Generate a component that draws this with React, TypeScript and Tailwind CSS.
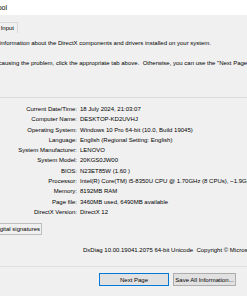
const rows: [string, string][] = [
  ["Current Date/Time:", "18 July 2024, 21:03:07"],
  ["Computer Name:", "DESKTOP-KD2UVHJ"],
  ["Operating System:", "Windows 10 Pro 64-bit (10.0, Build 19045)"],
  ["Language:", "English (Regional Setting: English)"],
  ["System Manufacturer:", "LENOVO"],
  ["System Model:", "20KGS0JW00"],
  ["BIOS:", "N23ET85W (1.60 )"],
  ["Processor:", "Intel(R) Core(TM) i5-8350U CPU @ 1.70GHz (8 CPUs), ~1.9GHz"],
  ["Memory:", "8192MB RAM"],
  ["Page file:", "3460MB used, 6490MB available"],
  ["DirectX Version:", "DirectX 12"],
];

export default function App() {
  return (
    <div
      className="w-[247px] h-[296px] overflow-hidden bg-[#f0f0f0] text-[6px] text-black leading-[10px]"
      style={{ fontFamily: '"Liberation Sans", Arial, sans-serif' }}
    >
      {/* title bar */}
      <div className="h-[15px] bg-white flex items-center">
        <div className="w-[7px] flex justify-end">
          <span className="flex-none whitespace-nowrap text-[7px]">DirectX Diagnostic Tool</span>
        </div>
      </div>

      {/* tabs */}
      <div className="mt-[7px] h-[11px] flex">
        <div className="w-[18px] flex justify-end">
          <div className="flex flex-none">
            {["System", "Display", "Sound", "Input"].map((t) => (
              <div
                key={t}
                className="h-[11px] px-[3px] border border-b-0 border-[#d9d9d9] bg-[#f0f0f0] flex items-center whitespace-nowrap"
              >
                {t}
              </div>
            ))}
          </div>
        </div>
      </div>

      {/* intro */}
      <div className="mt-[5px] w-[211px] flex justify-end">
        <div className="flex-none">
          <p className="whitespace-nowrap">
            This tool reports detailed information about the DirectX components and drivers installed on your system.
          </p>
          <div className="w-0 mt-[10px]">
            <p className="whitespace-nowrap">
              If you know what area is causing the problem, click the appropriate tab above.&nbsp; Otherwise, you can
              use the "Next Page" button below to visit each page in sequence.
            </p>
          </div>
        </div>
      </div>

      {/* system information group */}
      <div className="mt-[29px] border-t border-[#dcdcdc]">
        <div className="pt-[6px] leading-[10.3px]">
          {rows.map(([k, v]) => (
            <div key={k} className="flex whitespace-nowrap">
              <span className="w-[77px] flex-none text-right">{k}</span>
              <span className="ml-[3px]">{v}</span>
            </div>
          ))}
        </div>
      </div>

      {/* whql */}
      <div className="mt-[6px] w-[42px] flex justify-end">
        <div className="flex-none flex items-center gap-[3px] whitespace-nowrap">
          <span className="w-[8px] h-[8px] border border-[#333] bg-white" />
          <span className="border border-[#bdbdbd] px-[1px] h-[12px] flex items-center">
            Check for WHQL digital signatures
          </span>
        </div>
      </div>

      <div className="mt-[10px] pl-[83px] whitespace-nowrap">
        DxDiag 10.00.19041.2075 64-bit Unicode&nbsp; Copyright © Microsoft. All rights reserved.
      </div>

      {/* footer */}
      <div className="mt-[11px] border-t border-[#dfdfdf] pt-[6px] flex gap-[4px] pl-[99px]">
        <button className="w-[70px] h-[13px] border border-[#0078d7] bg-[#e1e1e1] flex items-center justify-center">
          Next Page
        </button>
        <button className="w-[63px] h-[13px] border border-[#adadad] bg-[#e1e1e1] flex items-center justify-center">
          Save All Information...
        </button>
      </div>
    </div>
  );
}
